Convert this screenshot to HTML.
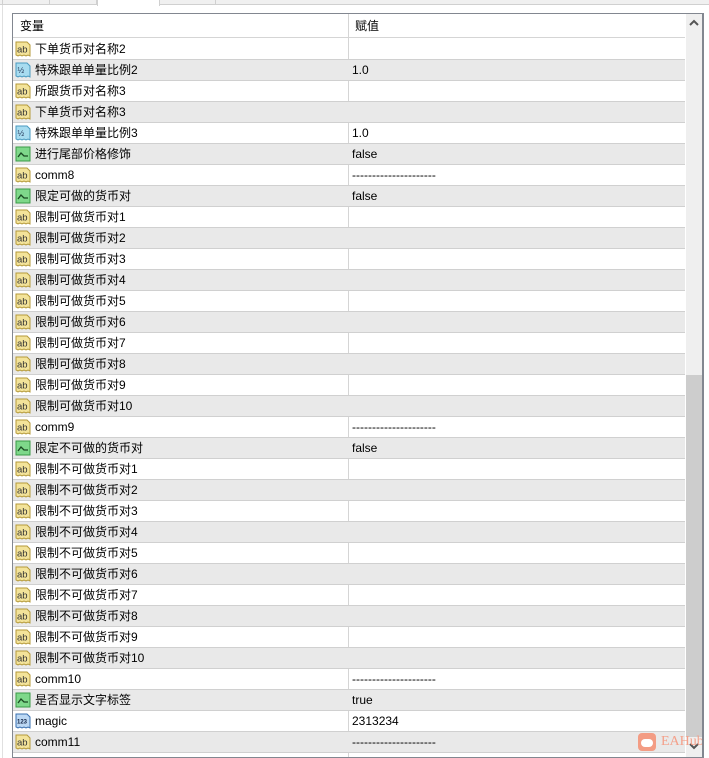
<!DOCTYPE html>
<html><head><meta charset="utf-8"><style>
*{margin:0;padding:0;box-sizing:border-box}
body{width:709px;height:758px;background:#fff;position:relative;overflow:hidden;font-family:"Liberation Sans","Noto Sans CJK SC",sans-serif;font-size:12px;color:#000}
.tabs{position:absolute;top:0;left:0;width:709px;height:5px;background:#f0f0f0;border-bottom:1px solid #d0d0d0}
.tab{position:absolute;top:0;height:5px;border-right:1px solid #d0d0d0}
.leftline{position:absolute;left:2px;top:5px;width:1px;height:753px;background:#e0e0e0}
.panel{position:absolute;left:12px;top:13px;width:692px;height:745px;border:1px solid #828790;border-right:2px solid #828790;background:#fff;overflow:hidden}
.hdr{position:absolute;left:0;top:0;width:672px;height:24px;border-bottom:1px solid #d5d5d5}
.hdr span{position:absolute;top:0;line-height:24px;height:24px}
.row{position:absolute;left:0;width:672px;height:21px;border-bottom:1px solid #d0d0d0}
.row.g{background:#e9e9e9}
.row .n,.row .v{position:absolute;top:0;height:20px;line-height:20px;white-space:nowrap}
.row .n{left:22px}
.row .v{left:339px}
.row .ic{position:absolute;left:2px;top:2px;width:16px;height:16px}
.col{position:absolute;left:335px;top:0;width:1px;height:745px;background:#d5d5d5}
.sb{position:absolute;left:673px;top:0;width:17px;height:745px;background:#efefef}
.thumb{position:absolute;left:673px;top:361px;width:17px;height:362px;background:#cdcdcd}
</style></head><body>
<div class="tabs">
<div class="tab" style="left:0;width:3px"></div>
<div class="tab" style="left:3px;width:47px"></div>
<div class="tab" style="left:50px;width:47px"></div>
<div class="tab" style="left:97px;width:63px;background:#fff;height:6px;border-left:1px solid #d0d0d0"></div>
<div class="tab" style="left:160px;width:56px"></div>
</div>
<div class="leftline"></div>
<div class="panel">
<div class="hdr"><span style="left:7px">变量</span><span style="left:342px">赋值</span></div>
<div class="col"></div>
<div id="rows"></div>
<div class="sb"></div>
<div class="thumb"></div>
<svg style="position:absolute;left:676px;top:5px" width="10" height="8"><path d="M1 6 L5 2 L9 6" stroke="#555" stroke-width="2" fill="none"/></svg>
<svg style="position:absolute;left:676px;top:728px" width="10" height="8"><path d="M1 2 L5 6 L9 2" stroke="#555" stroke-width="2" fill="none"/></svg>
<div style="position:absolute;left:625px;top:719px;width:18px;height:18px;background:#f39c84;border-radius:4px"><div style="position:absolute;left:3px;top:6px;width:12px;height:8px;background:#fff;border-radius:4px"></div></div>
<div style="position:absolute;left:648px;top:720px;color:#f4a08a;font-family:'Liberation Serif',serif;font-size:14px">EAHub</div>
</div>
<script>
var ab='<svg class="ic" viewBox="0 0 16 16"><path d="M1 1h11l3 3v11l-2-1-2 1-2-1-2 1-2-1-2 1-2-1z" fill="#f3e39a" stroke="#b59a3a"/><text x="2" y="11.5" font-size="9.5" font-family="Liberation Sans" fill="#333">ab</text></svg>';
var half='<svg class="ic" viewBox="0 0 16 16"><path d="M1 1h11l3 3v11l-2-1-2 1-2-1-2 1-2-1-2 1-2-1z" fill="#a8dcf0" stroke="#4a9ac0"/><text x="2.5" y="11" font-size="8" font-family="Liberation Sans" fill="#235">½</text></svg>';
var bool='<svg class="ic" viewBox="0 0 16 16"><rect x="1" y="1" width="14" height="14" fill="#7ed88a" stroke="#3a9a48"/><path d="M3 11 L6 7 L9 10 L13 10" stroke="#1a4a22" stroke-width="1.3" fill="none"/></svg>';
var num='<svg class="ic" viewBox="0 0 16 16"><path d="M1 1h11l3 3v11l-2-1-2 1-2-1-2 1-2-1-2 1-2-1z" fill="#bcd8f4" stroke="#3a70b0"/><text x="2" y="10.5" font-size="6" font-weight="bold" font-family="Liberation Sans" fill="#124">123</text></svg>';
var D='---------------------';
var R=[[ab,'下单货币对名称2',''],[half,'特殊跟单单量比例2','1.0'],[ab,'所跟货币对名称3',''],[ab,'下单货币对名称3',''],[half,'特殊跟单单量比例3','1.0'],[bool,'进行尾部价格修饰','false'],[ab,'comm8',D],[bool,'限定可做的货币对','false']];
for(var i=1;i<=10;i++)R.push([ab,'限制可做货币对'+i,'']);
R.push([ab,'comm9',D],[bool,'限定不可做的货币对','false']);
for(var i=1;i<=10;i++)R.push([ab,'限制不可做货币对'+i,'']);
R.push([ab,'comm10',D],[bool,'是否显示文字标签','true'],[num,'magic','2313234'],[ab,'comm11',D]);
var h='';
R.forEach(function(r,k){h+='<div class="row'+(k%2?' g':'')+'" style="top:'+(25+k*21)+'px">'+r[0]+'<span class="n">'+r[1]+'</span><span class="v">'+r[2]+'</span></div>';});
document.getElementById('rows').innerHTML=h;
</script>
</body></html>
